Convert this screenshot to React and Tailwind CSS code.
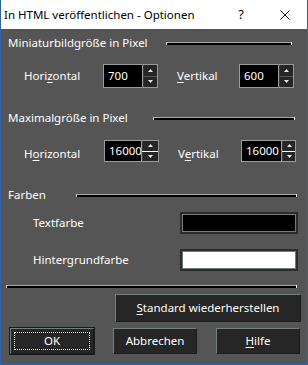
import React from "react";

const font = { fontFamily: '"Noto Sans", "Segoe UI", sans-serif' };

function Groove({ w }) {
  return (
    <div className="flex items-start" style={{ width: w }}>
      <div className="w-px h-[3px] bg-[#cfcfcf]" />
      <div className="flex-1 h-[3px] border-t border-[#a8a8a8] bg-black" />
      <div className="w-px h-[3px] bg-white" />
    </div>
  );
}

function SectionHeader({ label, labelW, lineW }) {
  return (
    <div className="flex items-center h-[16px] pl-[7px]">
      <div className="shrink-0 whitespace-nowrap" style={{ width: labelW }}>{label}</div>
      <Groove w={lineW} />
    </div>
  );
}

function Spin({ value, inputW, spinW, h, sep }) {
  return (
    <div className="flex" style={{ height: h }}>
      <div className="border border-[#9a9a9a] bg-black flex items-center pl-[4px] overflow-hidden whitespace-nowrap" style={{ width: inputW }}>
        {value}
      </div>
      <div className="flex flex-col border-y border-r border-[#9a9a9a] bg-[#3a3a3a]" style={{ width: spinW }}>
        <div className="flex-1 bg-[#262626] flex items-center justify-center border-l border-[#3c3c3c]">
          <svg width="5" height="3" viewBox="0 0 5 3"><path d="M2.5 0 L5 3 L0 3 Z" fill="#e8e8e8" /></svg>
        </div>
        <div className={sep ? "h-px bg-white" : "h-px bg-[#555]"} />
        <div className="flex-1 bg-[#262626] flex items-center justify-center border-l border-[#3c3c3c]">
          <svg width="5" height="3" viewBox="0 0 5 3"><path d="M0 0 L5 0 L2.5 3 Z" fill="#e8e8e8" /></svg>
        </div>
      </div>
    </div>
  );
}

function ColorBox({ fill }) {
  return (
    <div className="w-[118px] h-[22px] border-2 border-[#2c2c2c] bg-[#2c2c2c]">
      <div className={"w-full h-full border border-[#6e7c7c] " + fill} />
    </div>
  );
}

function Btn({ children, w, h, def }) {
  return (
    <div
      className={
        "flex items-center justify-center shrink-0 bg-[#262626] border-t border-l border-[#75807f] border-b border-r border-b-[#1a1a1a] border-r-[#1a1a1a] " +
        (def ? "outline outline-1 outline-[#1a1a1a]" : "")
      }
      style={{ width: w, height: h }}
    >
      {def ? (
        <div className="w-[calc(100%-6px)] h-[calc(100%-6px)] border border-dotted border-white flex items-center justify-center">
          {children}
        </div>
      ) : (
        children
      )}
    </div>
  );
}

export default function App() {
  return (
    <div className="w-[308px] h-[365px] flex flex-col border-x border-b border-[#2b64b5] bg-[#555555] text-white text-[11.5px] leading-none" style={font}>
      <div className="h-[29px] bg-white text-black flex items-center pl-[3px] shrink-0">
        <div className="w-[232px] whitespace-nowrap">In HTML veröffentlichen - Optionen</div>
        <div className="w-[10px] text-center text-[13px]">?</div>
        <div className="ml-[34px]">
          <svg width="10" height="10" viewBox="0 0 10 10"><path d="M0.5 0.5 L9.5 9.5 M9.5 0.5 L0.5 9.5" stroke="#111" strokeWidth="1" /></svg>
        </div>
      </div>

      <div className="mt-[6px]">
        <SectionHeader label="Miniaturbildgröße in Pixel" labelW={158} lineW={126} />
      </div>

      <div className="mt-[13px] flex items-center pl-[23px]">
        <div className="w-[79px]">Hori<u className="underline-offset-2">z</u>ontal</div>
        <Spin value="700" inputW={40} spinW={15} h={24} />
        <div className="w-[19px]" />
        <div className="w-[62px]"><u className="underline-offset-2">V</u>ertikal</div>
        <Spin value="600" inputW={40} spinW={15} h={24} />
      </div>

      <div className="mt-[22px]">
        <SectionHeader label="Maximalgröße in Pixel" labelW={145} lineW={142} />
      </div>

      <div className="mt-[14px] flex items-center pl-[23px]">
        <div className="w-[80px] pt-[5px]">H<u className="underline-offset-2">o</u>rizontal</div>
        <Spin value="16000" inputW={38} spinW={17} h={22} sep />
        <div className="w-[19px]" />
        <div className="w-[63px] pt-[5px]">V<u className="underline-offset-2">e</u>rtikal</div>
        <Spin value="16000" inputW={41} spinW={14} h={22} sep />
      </div>

      <div className="mt-[25px]">
        <SectionHeader label="Farben" labelW={68} lineW={221} />
      </div>

      <div className="mt-[9px] flex items-center pl-[32px]">
        <div className="w-[147px]">Textfarbe</div>
        <ColorBox fill="bg-black" />
      </div>

      <div className="mt-[15px] flex items-center pl-[32px]">
        <div className="w-[147px]">Hintergrundfarbe</div>
        <ColorBox fill="bg-white" />
      </div>

      <div className="mt-[14px] pl-[5px]">
        <Groove w={291} />
      </div>

      <div className="mt-[6px] pl-[114px]">
        <Btn w={186} h={28}><span><u className="underline-offset-2">S</u>tandard wiederherstellen</span></Btn>
      </div>

      <div className="mt-[6px] flex pl-[9px] gap-[19px]">
        <Btn w={84} h={26} def>OK</Btn>
        <Btn w={84} h={26}>Abbrechen</Btn>
        <Btn w={84} h={26}><span><u className="underline-offset-2">H</u>ilfe</span></Btn>
      </div>
    </div>
  );
}
